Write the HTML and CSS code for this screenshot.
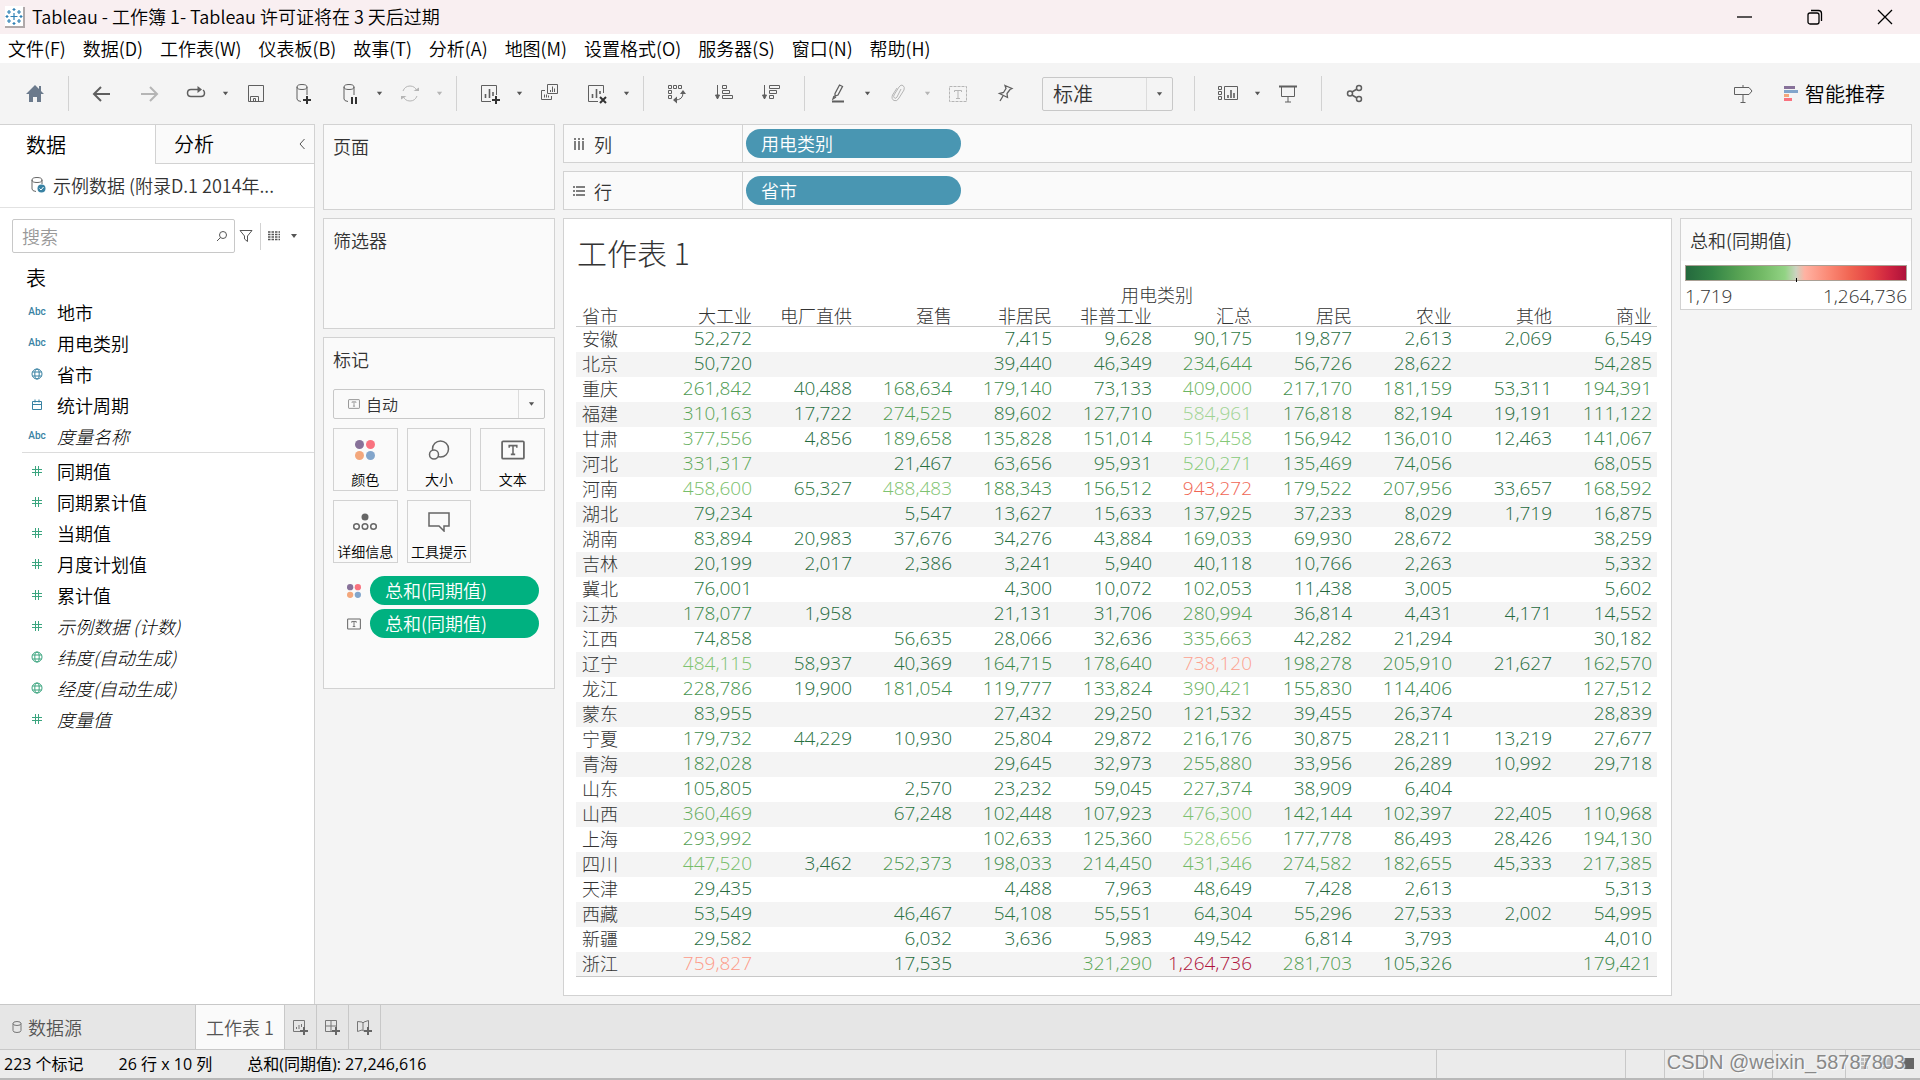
FILE: index.html
```
<!DOCTYPE html>
<html lang="zh-CN">
<head>
    <meta charset="UTF-8">
    <meta name="viewport" content="width=device-width, initial-scale=1.0">
    <title>Tableau - 工作簿 1</title>
    <link rel="stylesheet" href="styles.css">
</head>
<body>
    <!-- Shared icons -->
    <svg class="icon-defs" aria-hidden="true">
        <symbol id="caret" viewBox="0 0 8 8"><path d="M1 2h6L4 6z" fill="currentColor"/></symbol>
        <symbol id="globe" viewBox="0 0 12 12"><g fill="none" stroke="currentColor"><circle cx="6" cy="6" r="5"/><ellipse cx="6" cy="6" rx="2.2" ry="5"/><path d="M1.5 4h9M1.5 8h9"/></g></symbol>
        <symbol id="hash" viewBox="0 0 12 12"><path d="M4.500 1v10M7.500 1v10M1 4.500h10M1 7.500h10" stroke="currentColor" fill="none"/></symbol>
        <symbol id="dots" viewBox="0 0 20 20"><circle cx="4.500" cy="4.500" r="4.500" fill="#877199"/><circle cx="15.500" cy="4.500" r="4.500" fill="#f9727f"/><circle cx="4.500" cy="15.500" r="4.500" fill="#f3a77c"/><circle cx="15.500" cy="15.500" r="4.500" fill="#82a5cb"/></symbol>
        <symbol id="textbox" viewBox="0 0 22 18"><rect x="1" y="1" width="20" height="16" rx="1" fill="none" stroke="currentColor" stroke-width="1.6"/><path d="M7.500 7V5h7v2M11 5v8M9 13h4" fill="none" stroke="currentColor" stroke-width="1.4"/></symbol>
    </svg>

    <header class="title-bar">
        <svg class="app-logo" viewBox="0 0 22 22"><rect x="1" y="0" width="18" height="20" fill="#fff"/><path d="M1 21h19V1" fill="none" stroke="#b0a9aa" stroke-width="2"/><path d="M10 7v7M6.500 10.500h7M5 4v4M3 6h4M15 4v4M13 6h4M5 13v4M3 15h4M15 13v4M13 15h4M10 2v3M8.500 3.500h3M10 16v3M8.500 17.500h3M3 9v3M1.500 10.500h3M17 9v3M15.500 10.500h3" stroke="#2f80b5" stroke-width="1.200"/></svg>
        <span class="title-text">Tableau - 工作簿 1- Tableau 许可证将在 3 天后过期</span>
        <button class="win-button" aria-label="最小化"><svg viewBox="0 0 16 16"><path d="M0 8h15"/></svg></button>
        <button class="win-button" aria-label="还原"><svg viewBox="0 0 16 16"><rect x="1" y="4" width="11" height="11" rx="2"/><path d="M4 1.500h7.500q3 0 3 3V12"/></svg></button>
        <button class="win-button" aria-label="关闭"><svg viewBox="0 0 16 16"><path d="M1 1l14 14M15 1L1 15"/></svg></button>
    </header>

    <nav class="menu-bar">
        <button>文件(F)</button>
        <button>数据(D)</button>
        <button>工作表(W)</button>
        <button>仪表板(B)</button>
        <button>故事(T)</button>
        <button>分析(A)</button>
        <button>地图(M)</button>
        <button>设置格式(O)</button>
        <button>服务器(S)</button>
        <button>窗口(N)</button>
        <button>帮助(H)</button>
    </nav>

    <div class="toolbar">
        <button class="tool home" aria-label="主页"><svg viewBox="0 0 22 22"><path d="M11 2L2 11h3v8h4v-5h4v5h4v-8h3l-3-3V3h-2v3z" fill="#6b7a8c"/></svg></button>
        <span class="separator"></span>
        <button class="tool bold" aria-label="撤消"><svg viewBox="0 0 22 22"><path d="M19 11H4M10 4l-7 7 7 7"/></svg></button>
        <button class="tool bold off" aria-label="重做"><svg viewBox="0 0 22 22"><path d="M3 11h15M12 4l7 7-7 7"/></svg></button>
        <div class="split">
            <button class="tool" aria-label="重播"><svg viewBox="0 0 22 22"><path d="M13 6.500H6q-3.500 0-3.500 3.500t3.500 3.500h10q3.500 0 3.500-3.500 0-2-1.500-3" stroke-width="1.500"/><path d="M12.500 3v7l4.500-3.500z" fill="currentColor" stroke="none"/></svg></button>
            <button class="caret" aria-label="重播选项"><svg><use href="#caret"/></svg></button>
        </div>
        <button class="tool" aria-label="保存"><svg viewBox="0 0 22 22"><path d="M3.500 2.500h15v16h-15zM5.500 18v-4.500h8V18M8.500 18v-2.500h2V18"/></svg></button>
        <button class="tool" aria-label="新建数据源"><svg viewBox="0 0 22 22"><ellipse cx="10" cy="4" rx="5" ry="2.500"/><path d="M5 4v12q0 2 4 2.500M15 4v8"/><path d="M15 13v8M11 17h8" class="accent"/></svg></button>
        <div class="split">
            <button class="tool" aria-label="暂停自动更新"><svg viewBox="0 0 22 22"><ellipse cx="10" cy="4" rx="5" ry="2.500"/><path d="M5 4v12q0 2 4 2.500M15 4v8"/><path d="M13 14v7M17 14v7" class="accent"/></svg></button>
            <button class="caret" aria-label="自动更新选项"><svg><use href="#caret"/></svg></button>
        </div>
        <div class="split off">
            <button class="tool" aria-label="运行更新"><svg viewBox="0 0 22 22"><path d="M4 8q2-5 7-5 5 0 7 5M18 13q-2 5-7 5-5 0-7-5"/><path d="M14.500 8H20V4.500zM7.500 13H2v3.500z" fill="currentColor" stroke="none"/></svg></button>
            <button class="caret" aria-label="更新选项"><svg><use href="#caret"/></svg></button>
        </div>
        <span class="separator"></span>
        <div class="split">
            <button class="tool" aria-label="新建工作表"><svg viewBox="0 0 22 22"><path d="M12 18.500H2.500v-16h15V12"/><path d="M6.500 15v-4M10.500 15V6M14 13V9" stroke-width="1.600"/><path d="M17 13v8M13 17h8" class="accent"/></svg></button>
            <button class="caret" aria-label="新建选项"><svg><use href="#caret"/></svg></button>
        </div>
        <button class="tool" aria-label="复制工作表"><svg viewBox="0 0 22 22"><path d="M8.500 1.500h10v9h-10zM6 7.500H2.500v9h10V13M11.500 9V7M13.500 9V3.500M15.500 9V5.500M5.500 14.500v-3M7.500 14.500v-3M9.500 14.500v-2"/></svg></button>
        <div class="split">
            <button class="tool" aria-label="清除工作表"><svg viewBox="0 0 22 22"><path d="M12 18.500H2.500v-16h15V10"/><path d="M6.500 15v-4M10.500 15V6M14 11V8" stroke-width="1.600"/><path d="M14 14l6 6M20 14l-6 6" class="accent"/></svg></button>
            <button class="caret" aria-label="清除选项"><svg><use href="#caret"/></svg></button>
        </div>
        <span class="separator"></span>
        <button class="tool" aria-label="交换行和列"><svg viewBox="0 0 22 22"><path d="M2.500 2.500h3v3h-3zM7.500 2.500h3v3h-3zM12.500 2.500h3v3h-3zM2.500 7.500h3v3h-3zM2.500 12.500h3v3h-3zM17 10q0 7-8 7"/><path d="M14 11l3-4 3 4zM11 13.500L7 17l4 3.500z" fill="currentColor" stroke="none"/></svg></button>
        <button class="tool" aria-label="升序排序"><svg viewBox="0 0 22 22"><path d="M4.500 2v14M9.500 2.500h4v3h-4zM9.500 7.500h7v3h-7zM9.500 12.500h10v3h-10z"/><path d="M2.500 12h4l-2 4z" fill="currentColor"/></svg></button>
        <button class="tool" aria-label="降序排序"><svg viewBox="0 0 22 22"><path d="M4.500 2v14M9.500 2.500h10v3h-10zM9.500 7.500h7v3h-7zM9.500 12.500h4v3h-4z"/><path d="M2.500 12h4l-2 4z" fill="currentColor"/></svg></button>
        <span class="separator"></span>
        <div class="split">
            <button class="tool" aria-label="突出显示"><svg viewBox="0 0 22 22"><path d="M8 10.500l4.500-8.500 3 1.500-4.500 8.500-3 1zM8 10.500V13M7 13l-1 3 3-2" stroke-width="1.300"/><path d="M5 18.500h12" stroke-width="2"/></svg></button>
            <button class="caret" aria-label="突出显示选项"><svg><use href="#caret"/></svg></button>
        </div>
        <div class="split off">
            <button class="tool" aria-label="成员分组"><svg viewBox="0 0 22 22"><path d="M14 6l-4 8q-1 2-2.500 1T7 12l5-8q2-3 4-1.500T17 7l-5 8q-2 4-5 2.500T5.500 12L10 5"/></svg></button>
            <button class="caret" aria-label="分组选项"><svg><use href="#caret"/></svg></button>
        </div>
        <button class="tool off" aria-label="显示标记标签"><svg viewBox="0 0 22 22"><rect x="2.500" y="3.500" width="17" height="15" stroke-dasharray="3 1"/><path d="M7.500 9V7.500h7V9M11 7.500v8M9 15.500h4"/></svg></button>
        <button class="tool" aria-label="固定轴"><svg viewBox="0 0 22 22"><path d="M11 2.500l7 3-2 1-3 4 .5 4-8-4 4-1 2.500-4zM9 13l-3 5" stroke-width="1.300"/></svg></button>
        <label class="dropdown fit">
            <select aria-label="适合"><option>标准</option></select>
            <svg class="dropdown-caret"><use href="#caret"/></svg>
        </label>
        <span class="separator"></span>
        <div class="split">
            <button class="tool" aria-label="显示/隐藏卡"><svg viewBox="0 0 22 22"><path d="M1.500 3.500h3v3h-3zM1.500 8.500h3v3h-3zM1.500 13.500h3v3h-3zM7.500 3.500h13v13h-13z"/><path d="M11 15v-3M14 15V7M17 15v-5" stroke-width="1.600"/></svg></button>
            <button class="caret" aria-label="卡选项"><svg><use href="#caret"/></svg></button>
        </div>
        <button class="tool" aria-label="演示模式"><svg viewBox="0 0 22 22"><path d="M4.500 4v9.500h13V4M11 14v5M8 19h6"/><path d="M2 3.500h18" stroke-width="2"/></svg></button>
        <span class="separator"></span>
        <button class="tool" aria-label="共享工作簿"><svg viewBox="0 0 22 22"><g stroke-width="1.500"><circle cx="6" cy="10.500" r="2.500"/><circle cx="15" cy="5" r="2.500"/><circle cx="15" cy="16" r="2.500"/><path d="M8 9l5-3M8 12l5 3"/></g></svg></button>
        <button class="tool guide" aria-label="数据指南"><svg viewBox="0 0 22 22"><path d="M2.500 4.500H17l3 3.500-3 3.500H2.500zM11 2v2M11 12v7M8.500 19.500h5"/></svg></button>
        <button class="show-me"><svg viewBox="0 0 14 16"><path d="M0 0h11v3H0z" fill="#877199"/><path d="M0 4h14v3H0z" fill="#82a5cb"/><path d="M0 8h5v3H0z" fill="#f3a77c"/><path d="M0 12h8v3H0z" fill="#f9727f"/></svg>智能推荐</button>
    </div>

    <main class="workspace">
        <aside class="data-pane">
            <div class="pane-tabs">
                <button class="pane-tab active">数据</button>
                <button class="pane-tab">分析<svg viewBox="0 0 8 12"><path d="M6.500 1L2 6l4.500 5" fill="none" stroke="#555"/></svg></button>
            </div>
            <button class="source">
                <svg viewBox="0 0 16 18"><g fill="none" stroke="#666"><ellipse cx="6" cy="4" rx="5" ry="2.500"/><path d="M1 4v9q0 2 4 2.500M11 4v4"/></g><circle cx="10.500" cy="12.500" r="4" fill="#3982a3"/><path d="M8.500 12.500l1.500 1.500 2.500-3" fill="none" stroke="#fff"/></svg>
                示例数据 (附录D.1 2014年...
            </button>
            <div class="search-row">
                <div class="search">
                    <input type="text" placeholder="搜索" aria-label="搜索">
                    <svg viewBox="0 0 12 12"><circle cx="7" cy="5" r="3.500"/><path d="M4.500 7.500L1 11"/></svg>
                </div>
                <button aria-label="筛选字段"><svg viewBox="0 0 14 14"><path d="M1 1.500h12L8.500 7v5.500L5.500 10V7z"/></svg></button>
                <span class="search-divider"></span>
                <button aria-label="视图"><svg viewBox="0 0 14 14"><path d="M1 3h12M1 5.500h12M1 8h12M1 10.500h12" stroke-width="1.500" stroke-dasharray="2.500 1"/></svg></button>
                <button class="caret" aria-label="视图选项"><svg><use href="#caret"/></svg></button>
            </div>
            <h2>表</h2>
            <ul class="fields dimensions">
                <li><span class="abc">Abc</span>地市</li>
                <li><span class="abc">Abc</span>用电类别</li>
                <li><svg><use href="#globe"/></svg>省市</li>
                <li><svg viewBox="0 0 12 12"><path d="M1.500 2.500h9v8h-9zM1.500 5.500h9M4 .5v3M8 .5v3" fill="none" stroke="currentColor"/></svg>统计周期</li>
                <li class="generated"><span class="abc">Abc</span>度量名称</li>
            </ul>
            <ul class="fields measures">
                <li><svg><use href="#hash"/></svg>同期值</li>
                <li><svg><use href="#hash"/></svg>同期累计值</li>
                <li><svg><use href="#hash"/></svg>当期值</li>
                <li><svg><use href="#hash"/></svg>月度计划值</li>
                <li><svg><use href="#hash"/></svg>累计值</li>
                <li class="generated"><svg><use href="#hash"/></svg>示例数据 (计数)</li>
                <li class="generated"><svg><use href="#globe"/></svg>纬度(自动生成)</li>
                <li class="generated"><svg><use href="#globe"/></svg>经度(自动生成)</li>
                <li class="generated"><svg><use href="#hash"/></svg>度量值</li>
            </ul>
        </aside>

        <div class="cards">
            <section class="card pages"><h3>页面</h3></section>
            <section class="card filters"><h3>筛选器</h3></section>
            <section class="card marks">
                <h3>标记</h3>
                <label class="dropdown mark-type">
                    <select aria-label="标记类型"><option>自动</option></select>
                    <svg class="mark-icon"><use href="#textbox"/></svg>
                    <svg class="dropdown-caret"><use href="#caret"/></svg>
                </label>
                <div class="mark-tiles">
                    <button><svg><use href="#dots"/></svg>颜色</button>
                    <button><svg class="wide" viewBox="0 0 22 20"><g fill="none" stroke="#666" stroke-width="1.500"><circle cx="12.500" cy="9" r="8"/><circle cx="6" cy="14.500" r="4.500" fill="#fafafa"/></g></svg>大小</button>
                    <button><svg class="wide gray"><use href="#textbox"/></svg>文本</button>
                    <button><svg class="wide" viewBox="0 0 24 20"><circle cx="12" cy="5" r="3.500" fill="#666"/><g fill="none" stroke="#666" stroke-width="1.500"><circle cx="3.500" cy="14.500" r="2.800"/><circle cx="12" cy="14.500" r="2.800"/><circle cx="20.500" cy="14.500" r="2.800"/></g></svg>详细信息</button>
                    <button><svg class="wide" viewBox="0 0 22 20"><path d="M1 1h20v13h-5v5l-5-5H1z" fill="none" stroke="#666" stroke-width="1.500"/></svg>工具提示</button>
                </div>
                <div class="mark-pill"><svg><use href="#dots"/></svg><button class="pill green">总和(同期值)</button></div>
                <div class="mark-pill"><svg class="gray"><use href="#textbox"/></svg><button class="pill green">总和(同期值)</button></div>
            </section>
        </div>

        <div class="view">
            <div class="shelf">
                <div class="shelf-label"><svg viewBox="0 0 14 14"><path d="M3 1v2M7 1v2M11 1v2M3 4v9M7 4v9M11 4v9" stroke="#555" stroke-width="1.500"/></svg>列</div>
                <button class="pill blue">用电类别</button>
            </div>
            <div class="shelf">
                <div class="shelf-label"><svg viewBox="0 0 14 14"><path d="M1 3h2M1 7h2M1 11h2M4 3h9M4 7h9M4 11h9" stroke="#555" stroke-width="1.500"/></svg>行</div>
                <button class="pill blue">省市</button>
            </div>
            <div class="canvas">
                <section class="sheet">
                    <h1>工作表 1</h1>
                    <table>
                        <thead>
                            <tr><td></td><th colspan="10" class="group">用电类别</th></tr>
                            <tr>
                                <th class="row-head">省市</th>
                                <th>大工业</th><th>电厂直供</th><th>趸售</th><th>非居民</th><th>非普工业</th>
                                <th>汇总</th><th>居民</th><th>农业</th><th>其他</th><th>商业</th>
                            </tr>
                        </thead>
                        <tbody id="crosstab"></tbody>
                    </table>
                </section>
                <section class="legend">
                    <h3>总和(同期值)</h3>
                    <div class="legend-body">
                        <div class="ramp"></div>
                        <div class="range"><span>1,719</span><span>1,264,736</span></div>
                    </div>
                </section>
            </div>
        </div>
    </main>

    <div class="sheet-tabs">
        <button class="source-tab"><svg viewBox="0 0 10 14"><ellipse cx="5" cy="3.500" rx="4" ry="2"/><path d="M1 3.500v7q0 2 4 2t4-2v-7"/></svg>数据源</button>
        <button class="sheet-tab">工作表 1</button>
        <button class="new-tab" aria-label="新建工作表"><svg viewBox="0 0 16 16"><path d="M9 12.500H1.500v-11h11V8M4.500 10V8M7 10V6M9.500 8V5"/><path d="M12 8v8M8 12h8" class="plus"/></svg></button>
        <button class="new-tab" aria-label="新建仪表板"><svg viewBox="0 0 16 16"><path d="M8 12.500H1.500v-11h11V8M1.500 7h11M7 1.500v11"/><path d="M12 8v8M8 12h8" class="plus"/></svg></button>
        <button class="new-tab" aria-label="新建故事"><svg viewBox="0 0 16 16"><path d="M8 12l-2-1-4.500 1.500v-10L6 3l1 1 1-1 4.500-1.500V8M7 4v7"/><path d="M12 8v8M8 12h8" class="plus"/></svg></button>
    </div>

    <footer class="status-bar">
        <span>223 个标记</span>
        <span>26 行 x 10 列</span>
        <span>总和(同期值): 27,246,616</span>
        <div class="status-cells">
            <i></i><i></i><i></i><i></i><i></i>
            <i><svg viewBox="0 0 60 14"><g fill="#bbb"><path d="M0 1h3v3H0zM4 1h3v3H4zM8 1h3v3H8zM0 5h3v3H0zM4 5h3v3H4zM8 5h3v3H8zM0 9h3v3H0zM4 9h3v3H4zM8 9h3v3H8z"/><path d="M23 1h11v7H23zM23 9h5v3h-5zM29 9h5v3h-5z"/></g><path d="M46 1h11v11H46z" fill="#666"/></svg></i>
        </div>
        <div class="watermark">CSDN @weixin_58787803</div>
    </footer>

    <script src="script.js"></script>
</body>
</html>
```
FILE: styles.css
```
/* Base */
* {
    box-sizing: border-box;
}

body {
    margin: 0;
    height: 100vh;
    display: flex;
    flex-direction: column;
    background: #f4f4f4;
    color: #000;
    font-family: "Noto Sans CJK SC", sans-serif;
    font-size: 18px;
    font-weight: 350;
    line-height: 24px;
    overflow: hidden;
}

button,
input,
select {
    font: inherit;
    color: inherit;
    background: none;
    border: 0;
    padding: 0;
    margin: 0;
}

h1, h2, h3, ul {
    margin: 0;
    padding: 0;
    font-weight: inherit;
}

h3 {
    font-size: 18px;
}

svg {
    flex: none;
}

.icon-defs {
    display: none;
}

/* Title and menus */
.title-bar {
    display: flex;
    align-items: center;
    height: 34px;
    flex: none;
    padding-left: 4px;
    background: #f9eff1;
}

.app-logo {
    width: 22px;
    height: 22px;
}

.title-text {
    flex: 1;
    padding: 0 0 2px 6px;
}

.win-button {
    width: 70px;
    height: 34px;
}

.win-button svg {
    width: 16px;
    height: 16px;
    display: block;
    margin: 0 auto;
    fill: none;
    stroke: #000;
    stroke-width: 1.3;
}

.menu-bar {
    display: flex;
    gap: 17px;
    flex: none;
    height: 29px;
    padding: 0 8px 1px;
    background: #fff;
}

/* Toolbar */
.toolbar {
    display: flex;
    align-items: center;
    gap: 15px;
    flex: none;
    height: 61px;
    padding: 0 35px 0 19px;
}

.tool {
    width: 32px;
    height: 32px;
    color: #5f5f5f;
}

.tool svg {
    display: block;
    width: 22px;
    height: 22px;
    margin: 0 auto;
    fill: none;
    stroke: currentColor;
}

.home svg {
    stroke: none;
}

.tool.bold svg {
    stroke-width: 2;
}

.tool .accent {
    stroke: #333;
    stroke-width: 2;
}

.tool.off,
.off .tool,
.off .caret {
    color: #b5b5b5;
}

.separator {
    width: 1px;
    height: 35px;
    margin: 0 2px;
    background: #d2d2d2;
}

.split {
    display: flex;
    align-items: center;
    gap: 4px;
    margin-right: -9px;
}

.caret {
    width: 18px;
    height: 24px;
    color: #555;
}

.caret svg {
    display: block;
    width: 7px;
    height: 7px;
    margin: 0 auto;
}

.dropdown {
    display: grid;
    align-items: center;
    border: 1px solid #c8c8c8;
    border-radius: 2px;
    color: #333;
}

.dropdown > * {
    grid-area: 1 / 1;
}

.dropdown select {
    width: 100%;
    height: 100%;
    appearance: none;
}

.dropdown-caret {
    justify-self: end;
    width: 26px;
    height: 100%;
    padding: 0 9px;
    border-left: 1px solid #dcdcdc;
    color: #555;
    pointer-events: none;
}

.fit {
    width: 131px;
    height: 34px;
    margin: 0 4px 0 6px;
    font-size: 20px;
}

.fit select {
    padding-left: 10px;
}

.guide {
    margin-left: auto;
}

.show-me {
    display: flex;
    align-items: center;
    gap: 7px;
    margin-left: 10px;
    font-size: 20px;
}

.show-me svg {
    width: 14px;
    height: 16px;
}

/* Workspace */
.workspace {
    flex: 1;
    min-height: 0;
    display: grid;
    grid-template-columns: 315px 232px minmax(0, 1fr);
    column-gap: 8px;
    padding: 0 8px 8px 0;
}

.data-pane {
    margin-bottom: -8px;
    background: #fff;
    border: 1px solid #d2d2d2;
    border-width: 1px 1px 0 0;
}

.pane-tabs {
    display: flex;
    font-size: 20px;
}

.pane-tab {
    display: flex;
    flex: 1;
    align-items: center;
    justify-content: space-between;
    height: 39px;
    padding: 0 8px 0 18px;
    background: #fafafa;
    border: 1px solid #d2d2d2;
    border-width: 0 0 1px 1px;
}

.pane-tab svg {
    width: 8px;
    height: 12px;
}

.pane-tab.active {
    flex: 0 0 155px;
    padding-left: 26px;
    background: #fff;
    border: 0;
}

.source {
    display: flex;
    align-items: center;
    gap: 6px;
    width: 100%;
    height: 44px;
    padding: 0 0 2px 31px;
    border-bottom: 1px solid #e2e2e2;
    color: #333;
    white-space: nowrap;
}

.source svg {
    width: 16px;
    height: 18px;
}

.search-row {
    display: flex;
    align-items: center;
    padding: 11px 12px 0;
}

.search-row > button {
    width: 24px;
}

.search-row svg {
    display: block;
    width: 14px;
    height: 14px;
    margin: 0 auto;
    fill: none;
    stroke: #555;
}

.search-row .caret {
    width: 18px;
}

.search-row .caret svg {
    width: 8px;
    height: 8px;
    stroke: none;
}

.search {
    display: flex;
    align-items: center;
    width: 223px;
    height: 34px;
    padding: 0 6px 0 9px;
    border: 1px solid #c8c8c8;
    border-radius: 2px;
}

.search input {
    flex: 1;
    min-width: 0;
    outline: none;
}

.search input::placeholder {
    color: #999;
}

.search svg {
    width: 12px;
    height: 12px;
}

.search-divider {
    width: 1px;
    height: 27px;
    margin: 0 2px;
    background: #d2d2d2;
}

.data-pane h2 {
    padding: 13px 0 6px 26px;
    font-size: 20px;
}

.fields {
    list-style: none;
}

.fields li {
    display: flex;
    align-items: center;
    height: 31px;
    padding-left: 22px;
}

.fields svg,
.abc {
    flex: none;
    width: 12px;
    height: 12px;
    margin: 0 14px 0 9px;
}

.fields .abc {
    width: 30px;
    height: auto;
    margin: 0 5px 0 0;
    text-align: center;
    font: 500 10px/12px Roboto, sans-serif;
}

.dimensions svg,
.abc {
    color: #3982a3;
}

.measures svg {
    color: #3ba57f;
}

.measures {
    margin: 1px 0 0 22px;
    padding-top: 2px;
    border-top: 1px solid #dcdcdc;
}

.measures li {
    padding-left: 0;
}

.generated {
    font-style: italic;
    font-weight: 300;
}

.generated .abc {
    font-style: normal;
}

/* Cards */
.cards {
    display: flex;
    flex-direction: column;
    gap: 8px;
}

.card {
    padding: 9px;
    background: #fafafa;
    border: 1px solid #d2d2d2;
    color: #333;
}

.pages {
    min-height: 86px;
}

.filters {
    min-height: 111px;
}

.marks {
    padding-bottom: 46px;
}

.mark-type {
    height: 30px;
    margin: 18px 0 9px;
    font-size: 16px;
}

.mark-type select {
    padding-left: 32px;
}

.mark-icon {
    width: 12px;
    height: 12px;
    margin-left: 14px;
    color: #888;
    pointer-events: none;
}

.mark-tiles {
    display: grid;
    grid-template-columns: repeat(3, 1fr);
    gap: 9px;
    margin-bottom: 13px;
}

.mark-tiles button {
    display: flex;
    flex-direction: column;
    align-items: center;
    justify-content: space-between;
    height: 63px;
    padding: 11px 0 1px;
    border: 1px solid #d2d2d2;
    color: #000;
    font-size: 14px;
    line-height: 20px;
    white-space: nowrap;
}

.mark-tiles svg {
    width: 20px;
    height: 20px;
}

.mark-tiles .wide {
    width: 24px;
}

.gray {
    color: #666;
}

.mark-pill {
    display: flex;
    align-items: center;
    gap: 9px;
    margin-bottom: 4px;
    padding: 0 6px 0 14px;
}

.mark-pill svg {
    width: 14px;
    height: 14px;
}

.pill {
    height: 29px;
    padding: 0 15px 1px;
    border-radius: 15px;
    color: #fff;
    text-align: left;
}

.green {
    flex: 1;
    background: #00b180;
}

.blue {
    width: 215px;
    background: #4996b2;
}

/* Shelves and canvas */
.view {
    display: flex;
    flex-direction: column;
    gap: 8px;
    min-height: 0;
}

.shelf {
    display: flex;
    align-items: center;
    gap: 3px;
    flex: none;
    height: 39px;
    background: #fafafa;
    border: 1px solid #d2d2d2;
}

.shelf-label {
    display: flex;
    align-items: center;
    gap: 8px;
    width: 179px;
    height: 100%;
    padding-left: 8px;
    border-right: 1px solid #d2d2d2;
    color: #333;
}

.shelf-label svg {
    width: 14px;
    height: 14px;
}

.canvas {
    flex: 1;
    display: grid;
    grid-template-columns: minmax(0, 1fr) 232px;
    align-items: start;
    gap: 8px;
    min-height: 0;
}

.sheet {
    height: 100%;
    padding: 16px 14px 0 12px;
    background: #fff;
    border: 1px solid #d2d2d2;
}

.sheet h1 {
    padding: 0 1px;
    color: #333;
    font-size: 30px;
    font-weight: 300;
    line-height: 34px;
}

.sheet table {
    width: 100%;
    margin-top: 15px;
    table-layout: fixed;
    border-collapse: collapse;
    border-bottom: 1px solid #c8c8c8;
    font-weight: 300;
}

.sheet th,
.sheet td {
    height: 25px;
    padding: 0 5px 2px 0;
    font-weight: 300;
    line-height: 22px;
    text-align: right;
    white-space: nowrap;
}

.sheet tbody td,
.range {
    font-family: "Open Sans", sans-serif;
    font-size: 19px;
}

.sheet thead th,
.sheet thead td {
    height: 21px;
    padding-bottom: 1px;
    color: #333;
    line-height: 20px;
}

.sheet thead .group {
    padding-right: 0;
    text-align: center;
}

.sheet thead tr:first-child td {
    width: 81px;
}

.sheet .row-head {
    padding-left: 6px;
    color: #333;
    text-align: left;
}

.sheet tbody {
    border-top: 1px solid #c8c8c8;
}

.sheet tbody tr:nth-child(even) {
    background: #f4f4f4;
}

.legend {
    background: #fff;
    border: 1px solid #d2d2d2;
    color: #333;
}

.legend h3 {
    padding: 9px;
    background: #fafafa;
}

.legend-body {
    padding: 4px 4px 1px;
}

.ramp {
    position: relative;
    height: 16px;
    border: 1px solid #aaa095;
    background: linear-gradient(to right, #24693d, #348546 12%, #5aa555 25%, #74bb67 35%, #92d384 45%, #cbd3c0 50%, #ffb2a2 54%, #fb8874 65%, #f06351 75%, #e33f43 85%, #cb2240 93%, #ae123a);
}

/* Centre tick */
.ramp::after {
    content: "";
    position: absolute;
    left: 50%;
    bottom: -2px;
    width: 1px;
    height: 4px;
    background: #000;
}

.range {
    display: flex;
    justify-content: space-between;
    padding-top: 3px;
    font-weight: 300;
}

/* Sheet tabs and status */
.sheet-tabs {
    display: flex;
    flex: none;
    height: 46px;
    background: #e6e6e6;
    border: 1px solid #c8c8c8;
    border-width: 1px 0;
    color: #555;
}

.sheet-tabs button {
    border-right: 1px solid #c8c8c8;
}

.sheet-tabs svg {
    fill: none;
    stroke: #777;
}

.source-tab {
    display: flex;
    align-items: center;
    gap: 6px;
    width: 196px;
    padding-left: 12px;
}

.source-tab svg {
    width: 10px;
    height: 14px;
}

.sheet-tabs .sheet-tab {
    padding: 0 10px;
    background: #fafafa;
}

.new-tab {
    width: 32px;
}

.new-tab svg {
    display: block;
    width: 16px;
    height: 16px;
    margin: 0 auto;
}

.new-tab .plus {
    stroke: #666;
    stroke-width: 2;
}

.status-bar {
    position: relative;
    display: flex;
    align-items: center;
    gap: 35px;
    flex: none;
    height: 30px;
    padding-left: 4px;
    background: #ebebeb;
    border-bottom: 2px solid #b8b8b8;
    font-family: "Open Sans", "Noto Sans CJK SC", sans-serif;
    font-size: 16px;
    font-weight: 400;
}

.status-cells {
    display: grid;
    grid-template-columns: 189px 39px 39px 69px 73px 75px;
    height: 100%;
    margin-left: auto;
}

.status-cells i {
    display: flex;
    align-items: center;
    padding-left: 11px;
    border-left: 1px solid #c8c8c8;
}

.status-cells svg {
    width: 60px;
    height: 14px;
}

.watermark {
    position: absolute;
    right: 15px;
    top: 0;
    color: #888;
    font-family: "Liberation Sans", sans-serif;
    font-size: 20px;
    text-shadow: 1px 1px 1px #fff;
}
```
FILE: script.js
```
// Province, then one value for each category (null where there is no mark)
const rows = [
    ['安徽', 52272, null, null, 7415, 9628, 90175, 19877, 2613, 2069, 6549],
    ['北京', 50720, null, null, 39440, 46349, 234644, 56726, 28622, null, 54285],
    ['重庆', 261842, 40488, 168634, 179140, 73133, 409000, 217170, 181159, 53311, 194391],
    ['福建', 310163, 17722, 274525, 89602, 127710, 584961, 176818, 82194, 19191, 111122],
    ['甘肃', 377556, 4856, 189658, 135828, 151014, 515458, 156942, 136010, 12463, 141067],
    ['河北', 331317, null, 21467, 63656, 95931, 520271, 135469, 74056, null, 68055],
    ['河南', 458600, 65327, 488483, 188343, 156512, 943272, 179522, 207956, 33657, 168592],
    ['湖北', 79234, null, 5547, 13627, 15633, 137925, 37233, 8029, 1719, 16875],
    ['湖南', 83894, 20983, 37676, 34276, 43884, 169033, 69930, 28672, null, 38259],
    ['吉林', 20199, 2017, 2386, 3241, 5940, 40118, 10766, 2263, null, 5332],
    ['冀北', 76001, null, null, 4300, 10072, 102053, 11438, 3005, null, 5602],
    ['江苏', 178077, 1958, null, 21131, 31706, 280994, 36814, 4431, 4171, 14552],
    ['江西', 74858, null, 56635, 28066, 32636, 335663, 42282, 21294, null, 30182],
    ['辽宁', 484115, 58937, 40369, 164715, 178640, 738120, 198278, 205910, 21627, 162570],
    ['龙江', 228786, 19900, 181054, 119777, 133824, 390421, 155830, 114406, null, 127512],
    ['蒙东', 83955, null, null, 27432, 29250, 121532, 39455, 26374, null, 28839],
    ['宁夏', 179732, 44229, 10930, 25804, 29872, 216176, 30875, 28211, 13219, 27677],
    ['青海', 182028, null, null, 29645, 32973, 255880, 33956, 26289, 10992, 29718],
    ['山东', 105805, null, 2570, 23232, 59045, 227374, 38909, 6404, null, null],
    ['山西', 360469, null, 67248, 102448, 107923, 476300, 142144, 102397, 22405, 110968],
    ['上海', 293992, null, null, 102633, 125360, 528656, 177778, 86493, 28426, 194130],
    ['四川', 447520, 3462, 252373, 198033, 214450, 431346, 274582, 182655, 45333, 217385],
    ['天津', 29435, null, null, 4488, 7963, 48649, 7428, 2613, null, 5313],
    ['西藏', 53549, null, 46467, 54108, 55551, 64304, 55296, 27533, 2002, 54995],
    ['新疆', 29582, null, 6032, 3636, 5983, 49542, 6814, 3793, null, 4010],
    ['浙江', 759827, null, 17535, null, 321290, 1264736, 281703, 105326, null, 179421]
];

const min = 1719;
const max = 1264736;

// Same stops as the legend ramp
const stops = [
    [0, 36, 105, 61], [0.12, 52, 133, 70], [0.25, 90, 165, 85], [0.35, 116, 187, 103],
    [0.45, 146, 211, 132], [0.5, 203, 211, 192], [0.54, 255, 178, 162], [0.65, 251, 136, 116],
    [0.75, 240, 99, 81], [0.85, 227, 63, 67], [0.93, 203, 34, 64], [1, 174, 18, 58]
];

function colorFor(value) {
    const t = (value - min) / (max - min);
    let i = 1;
    while (i < stops.length - 1 && stops[i][0] < t) i++;
    const a = stops[i - 1];
    const b = stops[i];
    const k = (t - a[0]) / (b[0] - a[0]);
    const mix = [1, 2, 3].map(n => Math.round(a[n] + (b[n] - a[n]) * k));
    return `rgb(${mix.join(',')})`;
}

const body = document.getElementById('crosstab');
rows.forEach(([name, ...values]) => {
    const tr = body.insertRow();
    const th = document.createElement('th');
    th.className = 'row-head';
    th.textContent = name;
    tr.appendChild(th);
    values.forEach(value => {
        const td = tr.insertCell();
        if (value !== null) {
            td.textContent = value.toLocaleString('en-US');
            td.style.color = colorFor(value);
        }
    });
});
```
